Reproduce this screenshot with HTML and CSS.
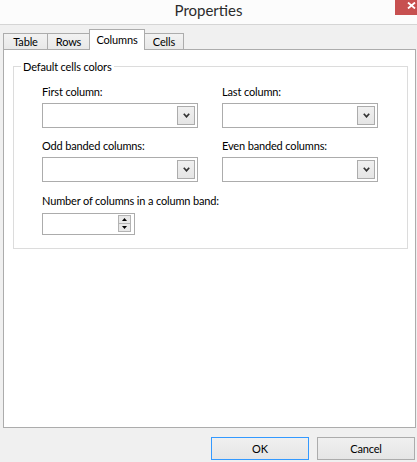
FILE: index.html
```html
<!DOCTYPE html>
<html lang="en">
<head>
<meta charset="utf-8">
<title>Properties</title>
<link rel="stylesheet" href="styles.css">
</head>
<body>
<div class="window">
  <div class="titlebar">
    <span class="title">Properties</span>
    <button class="close" aria-label="Close">
      <svg width="9" height="7" viewBox="0 0 9 7"><path d="M1 0.5 L8 6.5 M8 0.5 L1 6.5" stroke="#fff" stroke-width="1.8" fill="none"/></svg>
    </button>
  </div>
  <div class="tabs">
    <div class="tab tab-table">Table</div>
    <div class="tab tab-rows">Rows</div>
    <div class="tab tab-columns active">Columns</div>
    <div class="tab tab-cells">Cells</div>
  </div>
  <div class="panel">
    <fieldset class="group">
      <legend>Default cells colors</legend>
      <div class="group-body">
        <div class="grid">
          <div class="field">
            <label>First column:</label>
            <div class="combo"><span class="combo-btn"><svg width="7" height="5" viewBox="0 0 7 5"><path d="M0.8 0.8 L3.5 3.8 L6.2 0.8" stroke="#333" stroke-width="1.7" fill="none"/></svg></span></div>
          </div>
          <div class="field">
            <label>Last column:</label>
            <div class="combo"><span class="combo-btn"><svg width="7" height="5" viewBox="0 0 7 5"><path d="M0.8 0.8 L3.5 3.8 L6.2 0.8" stroke="#333" stroke-width="1.7" fill="none"/></svg></span></div>
          </div>
          <div class="field">
            <label>Odd banded columns:</label>
            <div class="combo"><span class="combo-btn"><svg width="7" height="5" viewBox="0 0 7 5"><path d="M0.8 0.8 L3.5 3.8 L6.2 0.8" stroke="#333" stroke-width="1.7" fill="none"/></svg></span></div>
          </div>
          <div class="field">
            <label>Even banded columns:</label>
            <div class="combo"><span class="combo-btn"><svg width="7" height="5" viewBox="0 0 7 5"><path d="M0.8 0.8 L3.5 3.8 L6.2 0.8" stroke="#333" stroke-width="1.7" fill="none"/></svg></span></div>
          </div>
        </div>
        <div class="field number">
          <label>Number of columns in a column band:</label>
          <div class="spin">
            <div class="spin-btns">
              <span class="spin-up"><svg width="5" height="3" viewBox="0 0 5 3"><polygon points="0,3 2.5,0 5,3" fill="#000"/></svg></span>
              <span class="spin-down"><svg width="5" height="3" viewBox="0 0 5 3"><polygon points="0,0 5,0 2.5,3" fill="#000"/></svg></span>
            </div>
          </div>
        </div>
      </div>
    </fieldset>
  </div>
  <div class="buttons">
    <button class="btn default">OK</button>
    <button class="btn">Cancel</button>
  </div>
</div>
</body>
</html>
```

FILE: styles.css
```css
* { box-sizing: border-box; }
html, body { margin: 0; padding: 0; }
body {
  width: 417px;
  height: 462px;
  overflow: hidden;
  background: #f0f0f0;
  font-family: Lato, "Liberation Sans", sans-serif;
  font-size: 11px;
  letter-spacing: -0.15px;
  color: #000;
}
.window { display: flex; flex-direction: column; height: 462px; }

.titlebar {
  height: 25px;
  flex: none;
  background: #fcfcfc;
  border-bottom: 1px solid #d5d5d5;
  display: grid;
  grid-template-columns: 1fr auto 1fr;
}
.title { grid-column: 2; font-size: 15px; line-height: 20px; color: #2b2b2b; letter-spacing: 0; }
.close {
  grid-column: 3;
  justify-self: end;
  align-self: start;
  width: 22px;
  height: 15px;
  margin: 0;
  border: 0;
  padding: 2px 1px 0 0;
  background: #c75050;
  display: flex;
  justify-content: flex-end;
  align-items: flex-start;
}
.close svg { display: block; }

.tabs {
  flex: none;
  height: 24px;
  display: flex;
  align-items: flex-end;
  padding: 4px 0 0 3px;
  position: relative;
  z-index: 1;
}
.tab {
  height: 16px;
  padding: 0;
  margin-left: -1px;
  border: 1px solid #acacac;
  border-bottom: 0;
  background: linear-gradient(#f2f2f2, #e8e8e8);
  line-height: 15px;
  text-align: center;
  white-space: nowrap;
}
.tab:first-child { margin-left: 0; }
.tab-table { width: 45px; }
.tab-rows { width: 43px; }
.tab-columns { width: 56px; }
.tab-cells { width: 40px; }
.tab.active {
  height: 21px;
  line-height: 19px;
  margin-bottom: -1px;
  background: #fff;
  position: relative;
  z-index: 1;
}

.panel {
  flex: none;
  height: 379px;
  margin: 0 1px 0 3px;
  background: #fff;
  border: 1px solid #acacac;
  padding: 9px 7px 0 9px;
}
.group {
  margin: 0;
  padding: 0;
  min-width: 0;
  border: 1px solid #dcdcdc;
}
.group legend {
  margin-left: 7px;
  padding: 0 2px;
  line-height: 15px;
}
.group-body { padding: 10px 0 13px 28px; }
.grid {
  display: grid;
  grid-template-columns: 156px 156px;
  column-gap: 24px;
  row-gap: 10px;
}
.field label { display: block; line-height: 15px; margin-bottom: 4px; white-space: nowrap; }
.combo {
  height: 25px;
  border: 1px solid #acacac;
  background: #fff;
  padding: 2px;
  display: flex;
  justify-content: flex-end;
}
.combo-btn {
  width: 18px;
  height: 19px;
  border: 1px solid #acacac;
  background: linear-gradient(#f0f0f0, #e5e5e5);
  display: flex;
  align-items: center;
  justify-content: center;
}
.combo-btn svg { display: block; }

.number { margin-top: 11px; }
.number label { margin-bottom: 5px; }
.spin {
  width: 93px;
  height: 22px;
  border: 1px solid #acacac;
  background: #fff;
  padding: 1px 3px 2px 0;
  display: flex;
  justify-content: flex-end;
}
.spin-btns {
  width: 13px;
  height: 17px;
  border: 1px solid #b3b3b3;
  background: #e8e8e8;
  display: flex;
  flex-direction: column;
}
.spin-up, .spin-down {
  flex: 1;
  display: flex;
  align-items: center;
  justify-content: center;
}
.spin-down { border-top: 1px solid #b3b3b3; }
.spin-btns svg { display: block; }

.buttons {
  flex: none;
  display: flex;
  justify-content: flex-end;
  gap: 8px;
  margin-top: 9px;
  padding-right: 2px;
}
.btn {
  width: 98px;
  height: 23px;
  margin: 0;
  padding: 0;
  border: 1px solid #acacac;
  background: linear-gradient(#f0f0f0, #e5e5e5);
  font-family: inherit;
  font-size: 11px;
  letter-spacing: -0.15px;
  color: #000;
}
.btn.default { border-color: #3399ff; }
```
